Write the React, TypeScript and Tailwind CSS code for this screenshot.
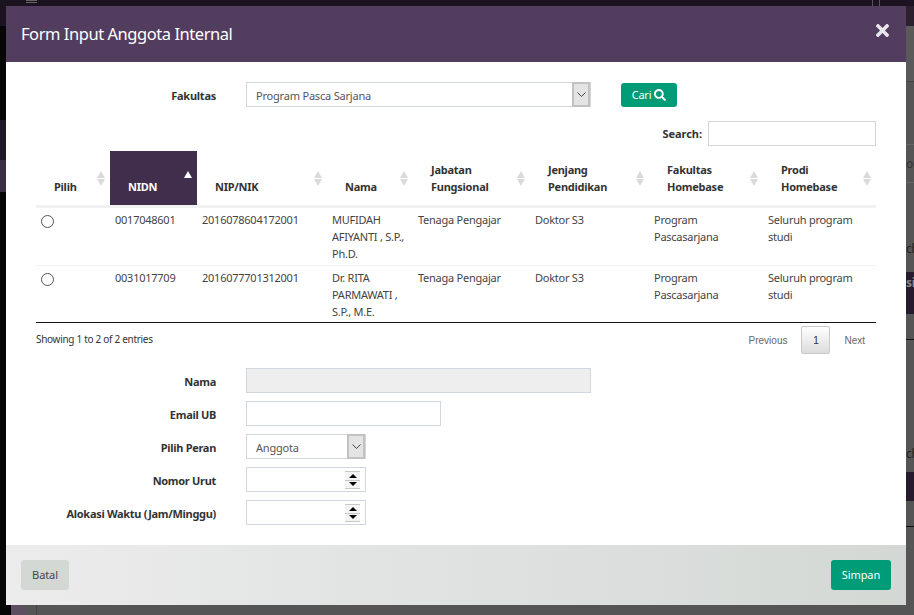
import { FaSearch, FaTimes } from "react-icons/fa";

const COLUMNS = [
  { label: ["Pilih"], cls: "w-[74px]" },
  { label: ["NIDN"], cls: "w-[87px] bg-[#412e4d] text-white", active: true },
  { label: ["NIP/NIK"], cls: "w-[130px]" },
  { label: ["Nama"], cls: "w-[86px]" },
  { label: ["Jabatan", "Fungsional"], cls: "w-[117px]" },
  { label: ["Jenjang", "Pendidikan"], cls: "w-[119px]" },
  { label: ["Fakultas", "Homebase"], cls: "w-[114px]" },
  { label: ["Prodi", "Homebase"], cls: "w-[113px]" },
];

const ROWS = [
  { nidn: "0017048601", nip: "2016078604172001", nama: ["MUFIDAH", "AFIYANTI , S.P.,", "Ph.D."] },
  { nidn: "0031017709", nip: "2016077701312001", nama: ["Dr. RITA", "PARMAWATI ,", "S.P., M.E."] },
];

function SortIcon({ active }: { active?: boolean }) {
  return (
    <svg viewBox="0 0 8 15" className="absolute right-[5px] top-[20px] h-[15px] w-[8px]" aria-hidden="true">
      <path d="M4 0 8 7H0Z" fill={active ? "#fff" : "#dadada"} />
      {!active && <path d="M0 8h8l-4 7Z" fill="#dadada" />}
    </svg>
  );
}

function Lines({ items }: { items: string[] }) {
  return (
    <>
      {items.map((t) => (
        <div key={t} className="whitespace-nowrap">{t}</div>
      ))}
    </>
  );
}

function FieldRow({ label, children }: { label: string; children: React.ReactNode }) {
  return (
    <div className="flex h-[25px] items-center">
      <label className="w-[180px] pt-[3px] text-right font-bold tracking-[-0.3px] text-[#333]">{label}</label>
      <div className="ml-[30px]">{children}</div>
    </div>
  );
}

function Spinner() {
  return (
    <div className="flex h-[18px] w-[15px] flex-col border-y border-[#c8c8c8] bg-[#c8c8c8]">
      <div className="mb-px flex h-[8px] items-center justify-center bg-[#f4f4f4]">
        <div className="h-0 w-0 border-x-[4px] border-b-[4px] border-x-transparent border-b-black" />
      </div>
      <div className="flex h-[7px] items-center justify-center bg-[#f4f4f4]">
        <div className="h-0 w-0 border-x-[4px] border-t-[4px] border-x-transparent border-t-black" />
      </div>
    </div>
  );
}

function NumberBox() {
  return (
    <div className="flex h-[25px] w-[120px] items-center justify-end border border-[#d2d6de] pr-[5px]">
      <Spinner />
    </div>
  );
}

function SelectBox({ value, width }: { value: string; width: string }) {
  return (
    <div className={`flex h-[25px] items-center justify-between border border-[#d2d6de] pl-[9px] tracking-[-0.2px] text-[#555] ${width}`}>
      <span className="pt-[3px]">{value}</span>
      <div className="flex h-[25px] w-[18px] items-center justify-center border-2 border-[#c2c2c2] bg-[#e4e4e4]">
        <svg viewBox="0 0 9 5" className="h-[5px] w-[9px]" aria-hidden="true">
          <path d="M.5.5 4.500 4.500 8.500.5" fill="none" stroke="#444" />
        </svg>
      </div>
    </div>
  );
}

export default function App() {
  return (
    <div className="relative flex h-[615px] w-[914px] flex-col overflow-hidden bg-[#555] font-['Noto_Sans',sans-serif] text-[11px] tracking-[-0.25px]">
      {/* page behind the dialog */}
      <div className="flex h-[6px] justify-between bg-[#1b1320] pl-[26px] pr-[34px]">
        <div className="flex h-[5px] w-[11px] flex-col gap-px">
          <div className="h-px bg-[#666]" />
          <div className="h-px bg-[#666]" />
        </div>
        <div className="h-[6px] w-[8px] border-x border-[#555]" />
      </div>
      <div className="flex flex-1 justify-between">
        <div className="flex w-[6px] flex-col">
          <div className="h-[20px] bg-[#1b1320]" />
          <div className="h-[94px] bg-[#060606]" />
          <div className="h-[40px] bg-[#201828]" />
          <div className="h-[32px] bg-[#3a2e42]" />
          <div className="flex-1 bg-[#050505]" />
        </div>
        <div className="flex w-[8px] flex-col overflow-hidden text-[12px] text-[#222]">
          <div className="h-[20px] bg-[#2a2030]" />
          <div className="h-[56px] border-b border-[#444] bg-[#5a5a5a]" />
          <div className="h-[63px] border-b border-[#666]" />
          <div className="h-[38px] border-b border-[#666] leading-[37px] text-[#333]">on</div>
          <div className="h-[89px] pt-[56px] leading-[20px]">ch</div>
          <div className="h-[42px] bg-[#251b2c] pt-[2px] font-bold text-[#888]">si</div>
          <div className="h-[26px] border-b border-[#111]" />
          <div className="h-[132px] pt-[104px] leading-[20px]">ch</div>
          <div className="h-[29px] bg-[#251b2c]" />
          <div className="h-[26px] border-b border-[#111]" />
          <div className="flex-1" />
        </div>
      </div>
      <div className="flex h-[10px]">
        <div className="w-[11px] bg-[#050505]" />
        <div className="w-[15px] bg-[#5c5060]" />
        <div className="w-[11px] border-r border-[#444]" />
      </div>

      <div className="absolute left-[6px] top-[6px] flex h-[599px] w-[900px] flex-col bg-white">
        <header className="flex h-[56px] items-center justify-between bg-[#533d5f] pl-[15px] pr-[15px] text-white">
          <h4 className="text-[16.5px] font-normal tracking-[-0.45px]">Form Input Anggota Internal</h4>
          <FaTimes className="mb-[8px] h-[19px] w-[17px] text-[#e8e8ec]" />
        </header>

        <div className="flex-1 px-[30px] pt-[20px]">
          <div className="flex items-center">
            <label className="w-[180px] pt-[3px] text-right font-bold tracking-[-0.25px] text-[#333]">Fakultas</label>
            <div className="ml-[30px]">
              <SelectBox value="Program Pasca Sarjana" width="w-[345px]" />
            </div>
            <button className="ml-[30px] flex h-[24px] w-[56px] items-center justify-center gap-[3px] rounded-[3px] bg-[#009b77] text-white">
              <span className="pt-[2px]">Cari</span>
              <FaSearch className="h-[12px] w-[12px]" />
            </button>
          </div>

          <div className="mt-[14px] flex items-center justify-end">
            <span className="pt-[1px] font-bold tracking-[-0.05px] text-[#333]">Search:</span>
            <input className="ml-[6px] h-[25px] w-[168px] border border-[#d5d5d5]" />
          </div>

          <div className="mt-[5px] w-[840px]">
            <div className="flex h-[54px] font-bold text-[#333]">
              {COLUMNS.map((c) => (
                <div key={c.label[0]} className={`relative flex h-[54px] flex-col justify-end pb-[10px] pl-[18px] leading-[17px] ${c.cls}`}>
                  <Lines items={c.label} />
                  <SortIcon active={c.active} />
                </div>
              ))}
            </div>
            <div className="h-[3px] bg-[#f1f1f1]" />
            {ROWS.map((r, i) => (
              <div key={r.nidn} className={`flex pt-[3px] leading-[17px] text-[#444] ${i === 0 ? "h-[58px] border-b border-[#f1f1f1]" : "h-[56px]"}`}>
                <div className="w-[74px] pl-[5px] pt-[4px]">
                  <div className="h-[13px] w-[13px] rounded-full border border-[#555] bg-white" />
                </div>
                <div className="w-[87px] pl-[5px]">{r.nidn}</div>
                <div className="w-[130px] pl-[5px]">{r.nip}</div>
                <div className="w-[86px] pl-[5px]"><Lines items={r.nama} /></div>
                <div className="w-[117px] pl-[5px]">Tenaga Pengajar</div>
                <div className="w-[119px] pl-[5px]">Doktor S3</div>
                <div className="w-[114px] pl-[5px]"><Lines items={["Program", "Pascasarjana"]} /></div>
                <div className="w-[113px] pl-[5px]"><Lines items={["Seluruh program", "studi"]} /></div>
              </div>
            ))}
            <div className="h-px bg-[#111]" />
          </div>

          <div className="flex h-[34px] w-[840px] items-center justify-between text-[10px]">
            <span className="pb-[1px] tracking-[-0.3px] text-[#333]">Showing 1 to 2 of 2 entries</span>
            <div className="flex items-center font-['Liberation_Sans',sans-serif] tracking-normal text-[#666]">
              <span className="mr-[14px]">Previous</span>
              <span className="flex h-[28px] w-[29px] items-center justify-center rounded-[2px] border border-[#cacaca] bg-gradient-to-b from-white to-[#dcdcdc] text-[#333]">1</span>
              <span className="ml-[14px] mr-[11px]">Next</span>
            </div>
          </div>

          <div className="mt-[11px] flex flex-col gap-[8px]">
            <FieldRow label="Nama">
              <div className="h-[25px] w-[345px] border border-[#d2d6de] bg-[#eee]" />
            </FieldRow>
            <FieldRow label="Email UB">
              <div className="h-[25px] w-[195px] border border-[#d2d6de]" />
            </FieldRow>
            <FieldRow label="Pilih Peran">
              <SelectBox value="Anggota" width="w-[120px]" />
            </FieldRow>
            <FieldRow label="Nomor Urut"><NumberBox /></FieldRow>
            <FieldRow label="Alokasi Waktu (Jam/Minggu)"><NumberBox /></FieldRow>
          </div>
        </div>

        <footer className="flex h-[60px] items-center justify-between bg-gradient-to-r from-[#ececec] to-[#d3d8d5] px-[15px] tracking-[-0.1px]">
          <button className="h-[30px] w-[48px] rounded-[3px] bg-[#d3d8d5] text-[#444]">Batal</button>
          <button className="h-[30px] w-[60px] rounded-[3px] bg-[#009b77] text-white">Simpan</button>
        </footer>
      </div>
    </div>
  );
}
